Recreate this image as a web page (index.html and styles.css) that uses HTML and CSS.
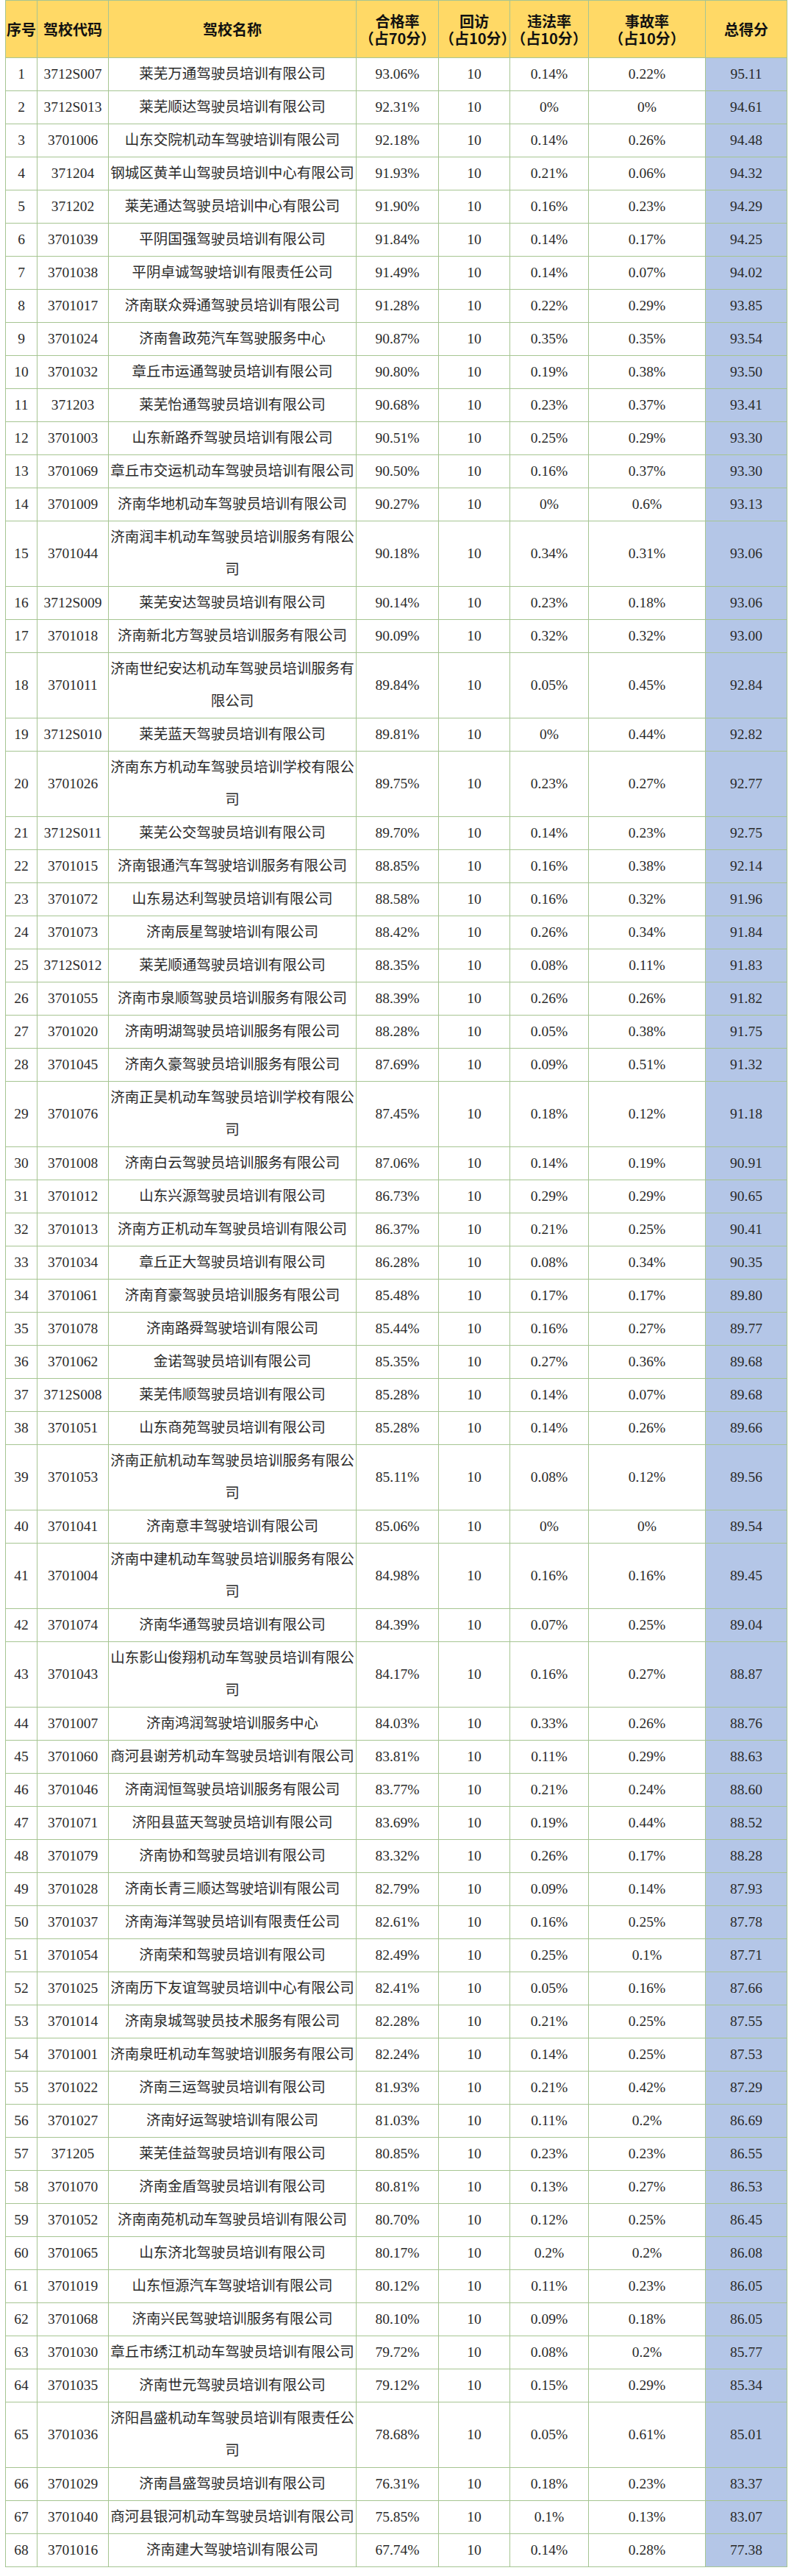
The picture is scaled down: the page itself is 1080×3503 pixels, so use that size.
FILE: index.html
```html
<!DOCTYPE html>
<html lang="zh-CN">
<head>
<meta charset="utf-8">
<title>驾校排名</title>
<link rel="stylesheet" href="styles.css">
</head>
<body>
<table class="rank">
<colgroup>
<col class="c-no"><col class="c-code"><col class="c-name"><col class="c-pass"><col class="c-visit"><col class="c-ill"><col class="c-acc"><col class="c-total">
</colgroup>
<thead>
<tr><th>序号</th><th>驾校代码</th><th>驾校名称</th><th>合格率<br>（占70分）</th><th>回访<br>（占10分）</th><th>违法率<br>（占10分）</th><th>事故率<br>（占10分）</th><th>总得分</th></tr>
</thead>
<tbody>
<tr><td>1</td><td>3712S007</td><td>莱芜万通驾驶员培训有限公司</td><td>93.06%</td><td>10</td><td>0.14%</td><td>0.22%</td><td class="score">95.11</td></tr>
<tr><td>2</td><td>3712S013</td><td>莱芜顺达驾驶员培训有限公司</td><td>92.31%</td><td>10</td><td>0%</td><td>0%</td><td class="score">94.61</td></tr>
<tr><td>3</td><td>3701006</td><td>山东交院机动车驾驶培训有限公司</td><td>92.18%</td><td>10</td><td>0.14%</td><td>0.26%</td><td class="score">94.48</td></tr>
<tr><td>4</td><td>371204</td><td>钢城区黄羊山驾驶员培训中心有限公司</td><td>91.93%</td><td>10</td><td>0.21%</td><td>0.06%</td><td class="score">94.32</td></tr>
<tr><td>5</td><td>371202</td><td>莱芜通达驾驶员培训中心有限公司</td><td>91.90%</td><td>10</td><td>0.16%</td><td>0.23%</td><td class="score">94.29</td></tr>
<tr><td>6</td><td>3701039</td><td>平阴国强驾驶员培训有限公司</td><td>91.84%</td><td>10</td><td>0.14%</td><td>0.17%</td><td class="score">94.25</td></tr>
<tr><td>7</td><td>3701038</td><td>平阴卓诚驾驶培训有限责任公司</td><td>91.49%</td><td>10</td><td>0.14%</td><td>0.07%</td><td class="score">94.02</td></tr>
<tr><td>8</td><td>3701017</td><td>济南联众舜通驾驶员培训有限公司</td><td>91.28%</td><td>10</td><td>0.22%</td><td>0.29%</td><td class="score">93.85</td></tr>
<tr><td>9</td><td>3701024</td><td>济南鲁政苑汽车驾驶服务中心</td><td>90.87%</td><td>10</td><td>0.35%</td><td>0.35%</td><td class="score">93.54</td></tr>
<tr><td>10</td><td>3701032</td><td>章丘市运通驾驶员培训有限公司</td><td>90.80%</td><td>10</td><td>0.19%</td><td>0.38%</td><td class="score">93.50</td></tr>
<tr><td>11</td><td>371203</td><td>莱芜怡通驾驶员培训有限公司</td><td>90.68%</td><td>10</td><td>0.23%</td><td>0.37%</td><td class="score">93.41</td></tr>
<tr><td>12</td><td>3701003</td><td>山东新路乔驾驶员培训有限公司</td><td>90.51%</td><td>10</td><td>0.25%</td><td>0.29%</td><td class="score">93.30</td></tr>
<tr><td>13</td><td>3701069</td><td>章丘市交运机动车驾驶员培训有限公司</td><td>90.50%</td><td>10</td><td>0.16%</td><td>0.37%</td><td class="score">93.30</td></tr>
<tr><td>14</td><td>3701009</td><td>济南华地机动车驾驶员培训有限公司</td><td>90.27%</td><td>10</td><td>0%</td><td>0.6%</td><td class="score">93.13</td></tr>
<tr><td>15</td><td>3701044</td><td>济南润丰机动车驾驶员培训服务有限公司</td><td>90.18%</td><td>10</td><td>0.34%</td><td>0.31%</td><td class="score">93.06</td></tr>
<tr><td>16</td><td>3712S009</td><td>莱芜安达驾驶员培训有限公司</td><td>90.14%</td><td>10</td><td>0.23%</td><td>0.18%</td><td class="score">93.06</td></tr>
<tr><td>17</td><td>3701018</td><td>济南新北方驾驶员培训服务有限公司</td><td>90.09%</td><td>10</td><td>0.32%</td><td>0.32%</td><td class="score">93.00</td></tr>
<tr><td>18</td><td>3701011</td><td>济南世纪安达机动车驾驶员培训服务有限公司</td><td>89.84%</td><td>10</td><td>0.05%</td><td>0.45%</td><td class="score">92.84</td></tr>
<tr><td>19</td><td>3712S010</td><td>莱芜蓝天驾驶员培训有限公司</td><td>89.81%</td><td>10</td><td>0%</td><td>0.44%</td><td class="score">92.82</td></tr>
<tr><td>20</td><td>3701026</td><td>济南东方机动车驾驶员培训学校有限公司</td><td>89.75%</td><td>10</td><td>0.23%</td><td>0.27%</td><td class="score">92.77</td></tr>
<tr><td>21</td><td>3712S011</td><td>莱芜公交驾驶员培训有限公司</td><td>89.70%</td><td>10</td><td>0.14%</td><td>0.23%</td><td class="score">92.75</td></tr>
<tr><td>22</td><td>3701015</td><td>济南银通汽车驾驶培训服务有限公司</td><td>88.85%</td><td>10</td><td>0.16%</td><td>0.38%</td><td class="score">92.14</td></tr>
<tr><td>23</td><td>3701072</td><td>山东易达利驾驶员培训有限公司</td><td>88.58%</td><td>10</td><td>0.16%</td><td>0.32%</td><td class="score">91.96</td></tr>
<tr><td>24</td><td>3701073</td><td>济南辰星驾驶培训有限公司</td><td>88.42%</td><td>10</td><td>0.26%</td><td>0.34%</td><td class="score">91.84</td></tr>
<tr><td>25</td><td>3712S012</td><td>莱芜顺通驾驶员培训有限公司</td><td>88.35%</td><td>10</td><td>0.08%</td><td>0.11%</td><td class="score">91.83</td></tr>
<tr><td>26</td><td>3701055</td><td>济南市泉顺驾驶员培训服务有限公司</td><td>88.39%</td><td>10</td><td>0.26%</td><td>0.26%</td><td class="score">91.82</td></tr>
<tr><td>27</td><td>3701020</td><td>济南明湖驾驶员培训服务有限公司</td><td>88.28%</td><td>10</td><td>0.05%</td><td>0.38%</td><td class="score">91.75</td></tr>
<tr><td>28</td><td>3701045</td><td>济南久豪驾驶员培训服务有限公司</td><td>87.69%</td><td>10</td><td>0.09%</td><td>0.51%</td><td class="score">91.32</td></tr>
<tr><td>29</td><td>3701076</td><td>济南正昊机动车驾驶员培训学校有限公司</td><td>87.45%</td><td>10</td><td>0.18%</td><td>0.12%</td><td class="score">91.18</td></tr>
<tr><td>30</td><td>3701008</td><td>济南白云驾驶员培训服务有限公司</td><td>87.06%</td><td>10</td><td>0.14%</td><td>0.19%</td><td class="score">90.91</td></tr>
<tr><td>31</td><td>3701012</td><td>山东兴源驾驶员培训有限公司</td><td>86.73%</td><td>10</td><td>0.29%</td><td>0.29%</td><td class="score">90.65</td></tr>
<tr><td>32</td><td>3701013</td><td>济南方正机动车驾驶员培训有限公司</td><td>86.37%</td><td>10</td><td>0.21%</td><td>0.25%</td><td class="score">90.41</td></tr>
<tr><td>33</td><td>3701034</td><td>章丘正大驾驶员培训有限公司</td><td>86.28%</td><td>10</td><td>0.08%</td><td>0.34%</td><td class="score">90.35</td></tr>
<tr><td>34</td><td>3701061</td><td>济南育豪驾驶员培训服务有限公司</td><td>85.48%</td><td>10</td><td>0.17%</td><td>0.17%</td><td class="score">89.80</td></tr>
<tr><td>35</td><td>3701078</td><td>济南路舜驾驶培训有限公司</td><td>85.44%</td><td>10</td><td>0.16%</td><td>0.27%</td><td class="score">89.77</td></tr>
<tr><td>36</td><td>3701062</td><td>金诺驾驶员培训有限公司</td><td>85.35%</td><td>10</td><td>0.27%</td><td>0.36%</td><td class="score">89.68</td></tr>
<tr><td>37</td><td>3712S008</td><td>莱芜伟顺驾驶员培训有限公司</td><td>85.28%</td><td>10</td><td>0.14%</td><td>0.07%</td><td class="score">89.68</td></tr>
<tr><td>38</td><td>3701051</td><td>山东商苑驾驶员培训有限公司</td><td>85.28%</td><td>10</td><td>0.14%</td><td>0.26%</td><td class="score">89.66</td></tr>
<tr><td>39</td><td>3701053</td><td>济南正航机动车驾驶员培训服务有限公司</td><td>85.11%</td><td>10</td><td>0.08%</td><td>0.12%</td><td class="score">89.56</td></tr>
<tr><td>40</td><td>3701041</td><td>济南意丰驾驶培训有限公司</td><td>85.06%</td><td>10</td><td>0%</td><td>0%</td><td class="score">89.54</td></tr>
<tr><td>41</td><td>3701004</td><td>济南中建机动车驾驶员培训服务有限公司</td><td>84.98%</td><td>10</td><td>0.16%</td><td>0.16%</td><td class="score">89.45</td></tr>
<tr><td>42</td><td>3701074</td><td>济南华通驾驶员培训有限公司</td><td>84.39%</td><td>10</td><td>0.07%</td><td>0.25%</td><td class="score">89.04</td></tr>
<tr><td>43</td><td>3701043</td><td>山东影山俊翔机动车驾驶员培训有限公司</td><td>84.17%</td><td>10</td><td>0.16%</td><td>0.27%</td><td class="score">88.87</td></tr>
<tr><td>44</td><td>3701007</td><td>济南鸿润驾驶培训服务中心</td><td>84.03%</td><td>10</td><td>0.33%</td><td>0.26%</td><td class="score">88.76</td></tr>
<tr><td>45</td><td>3701060</td><td>商河县谢芳机动车驾驶员培训有限公司</td><td>83.81%</td><td>10</td><td>0.11%</td><td>0.29%</td><td class="score">88.63</td></tr>
<tr><td>46</td><td>3701046</td><td>济南润恒驾驶员培训服务有限公司</td><td>83.77%</td><td>10</td><td>0.21%</td><td>0.24%</td><td class="score">88.60</td></tr>
<tr><td>47</td><td>3701071</td><td>济阳县蓝天驾驶员培训有限公司</td><td>83.69%</td><td>10</td><td>0.19%</td><td>0.44%</td><td class="score">88.52</td></tr>
<tr><td>48</td><td>3701079</td><td>济南协和驾驶员培训有限公司</td><td>83.32%</td><td>10</td><td>0.26%</td><td>0.17%</td><td class="score">88.28</td></tr>
<tr><td>49</td><td>3701028</td><td>济南长青三顺达驾驶培训有限公司</td><td>82.79%</td><td>10</td><td>0.09%</td><td>0.14%</td><td class="score">87.93</td></tr>
<tr><td>50</td><td>3701037</td><td>济南海洋驾驶员培训有限责任公司</td><td>82.61%</td><td>10</td><td>0.16%</td><td>0.25%</td><td class="score">87.78</td></tr>
<tr><td>51</td><td>3701054</td><td>济南荣和驾驶员培训有限公司</td><td>82.49%</td><td>10</td><td>0.25%</td><td>0.1%</td><td class="score">87.71</td></tr>
<tr><td>52</td><td>3701025</td><td>济南历下友谊驾驶员培训中心有限公司</td><td>82.41%</td><td>10</td><td>0.05%</td><td>0.16%</td><td class="score">87.66</td></tr>
<tr><td>53</td><td>3701014</td><td>济南泉城驾驶员技术服务有限公司</td><td>82.28%</td><td>10</td><td>0.21%</td><td>0.25%</td><td class="score">87.55</td></tr>
<tr><td>54</td><td>3701001</td><td>济南泉旺机动车驾驶培训服务有限公司</td><td>82.24%</td><td>10</td><td>0.14%</td><td>0.25%</td><td class="score">87.53</td></tr>
<tr><td>55</td><td>3701022</td><td>济南三运驾驶员培训有限公司</td><td>81.93%</td><td>10</td><td>0.21%</td><td>0.42%</td><td class="score">87.29</td></tr>
<tr><td>56</td><td>3701027</td><td>济南好运驾驶培训有限公司</td><td>81.03%</td><td>10</td><td>0.11%</td><td>0.2%</td><td class="score">86.69</td></tr>
<tr><td>57</td><td>371205</td><td>莱芜佳益驾驶员培训有限公司</td><td>80.85%</td><td>10</td><td>0.23%</td><td>0.23%</td><td class="score">86.55</td></tr>
<tr><td>58</td><td>3701070</td><td>济南金盾驾驶员培训有限公司</td><td>80.81%</td><td>10</td><td>0.13%</td><td>0.27%</td><td class="score">86.53</td></tr>
<tr><td>59</td><td>3701052</td><td>济南南苑机动车驾驶员培训有限公司</td><td>80.70%</td><td>10</td><td>0.12%</td><td>0.25%</td><td class="score">86.45</td></tr>
<tr><td>60</td><td>3701065</td><td>山东济北驾驶员培训有限公司</td><td>80.17%</td><td>10</td><td>0.2%</td><td>0.2%</td><td class="score">86.08</td></tr>
<tr><td>61</td><td>3701019</td><td>山东恒源汽车驾驶培训有限公司</td><td>80.12%</td><td>10</td><td>0.11%</td><td>0.23%</td><td class="score">86.05</td></tr>
<tr><td>62</td><td>3701068</td><td>济南兴民驾驶培训服务有限公司</td><td>80.10%</td><td>10</td><td>0.09%</td><td>0.18%</td><td class="score">86.05</td></tr>
<tr><td>63</td><td>3701030</td><td>章丘市绣江机动车驾驶员培训有限公司</td><td>79.72%</td><td>10</td><td>0.08%</td><td>0.2%</td><td class="score">85.77</td></tr>
<tr><td>64</td><td>3701035</td><td>济南世元驾驶员培训有限公司</td><td>79.12%</td><td>10</td><td>0.15%</td><td>0.29%</td><td class="score">85.34</td></tr>
<tr><td>65</td><td>3701036</td><td>济阳昌盛机动车驾驶员培训有限责任公司</td><td>78.68%</td><td>10</td><td>0.05%</td><td>0.61%</td><td class="score">85.01</td></tr>
<tr><td>66</td><td>3701029</td><td>济南昌盛驾驶员培训有限公司</td><td>76.31%</td><td>10</td><td>0.18%</td><td>0.23%</td><td class="score">83.37</td></tr>
<tr><td>67</td><td>3701040</td><td>商河县银河机动车驾驶员培训有限公司</td><td>75.85%</td><td>10</td><td>0.1%</td><td>0.13%</td><td class="score">83.07</td></tr>
<tr><td>68</td><td>3701016</td><td>济南建大驾驶培训有限公司</td><td>67.74%</td><td>10</td><td>0.14%</td><td>0.28%</td><td class="score">77.38</td></tr>
</tbody>
</table>
</body>
</html>
```
FILE: styles.css
```css
html, body {
  margin: 0;
  padding: 0;
  background: #ffffff;
}

.rank {
  border-collapse: collapse;
  table-layout: fixed;
  width: 1063px;
  margin-left: 7px;
  font-family: "Liberation Serif", "Noto Sans CJK SC", serif;
  font-size: 19.5px;
  color: #2a2a2a;
}

.c-no { width: 43px; }
.c-code { width: 97px; }
.c-name { width: 337px; }
.c-pass { width: 112px; }
.c-visit { width: 97px; }
.c-ill { width: 107px; }
.c-acc { width: 159px; }
.c-total { width: 111px; }

.rank th,
.rank td {
  border: 1px solid #a6c592;
  text-align: center;
  vertical-align: middle;
  padding: 0 1px;
}

.rank td {
  line-height: 44px;
  height: 44px;
}

.rank th {
  background: #ffd966;
  height: 77px;
  font-family: "Noto Sans CJK SC", "Noto Sans", sans-serif;
  font-weight: 700;
  font-size: 20px;
  line-height: 23px;
  color: #111111;
  white-space: nowrap;
}

.rank td.score {
  background: #b4c6e7;
}
```
